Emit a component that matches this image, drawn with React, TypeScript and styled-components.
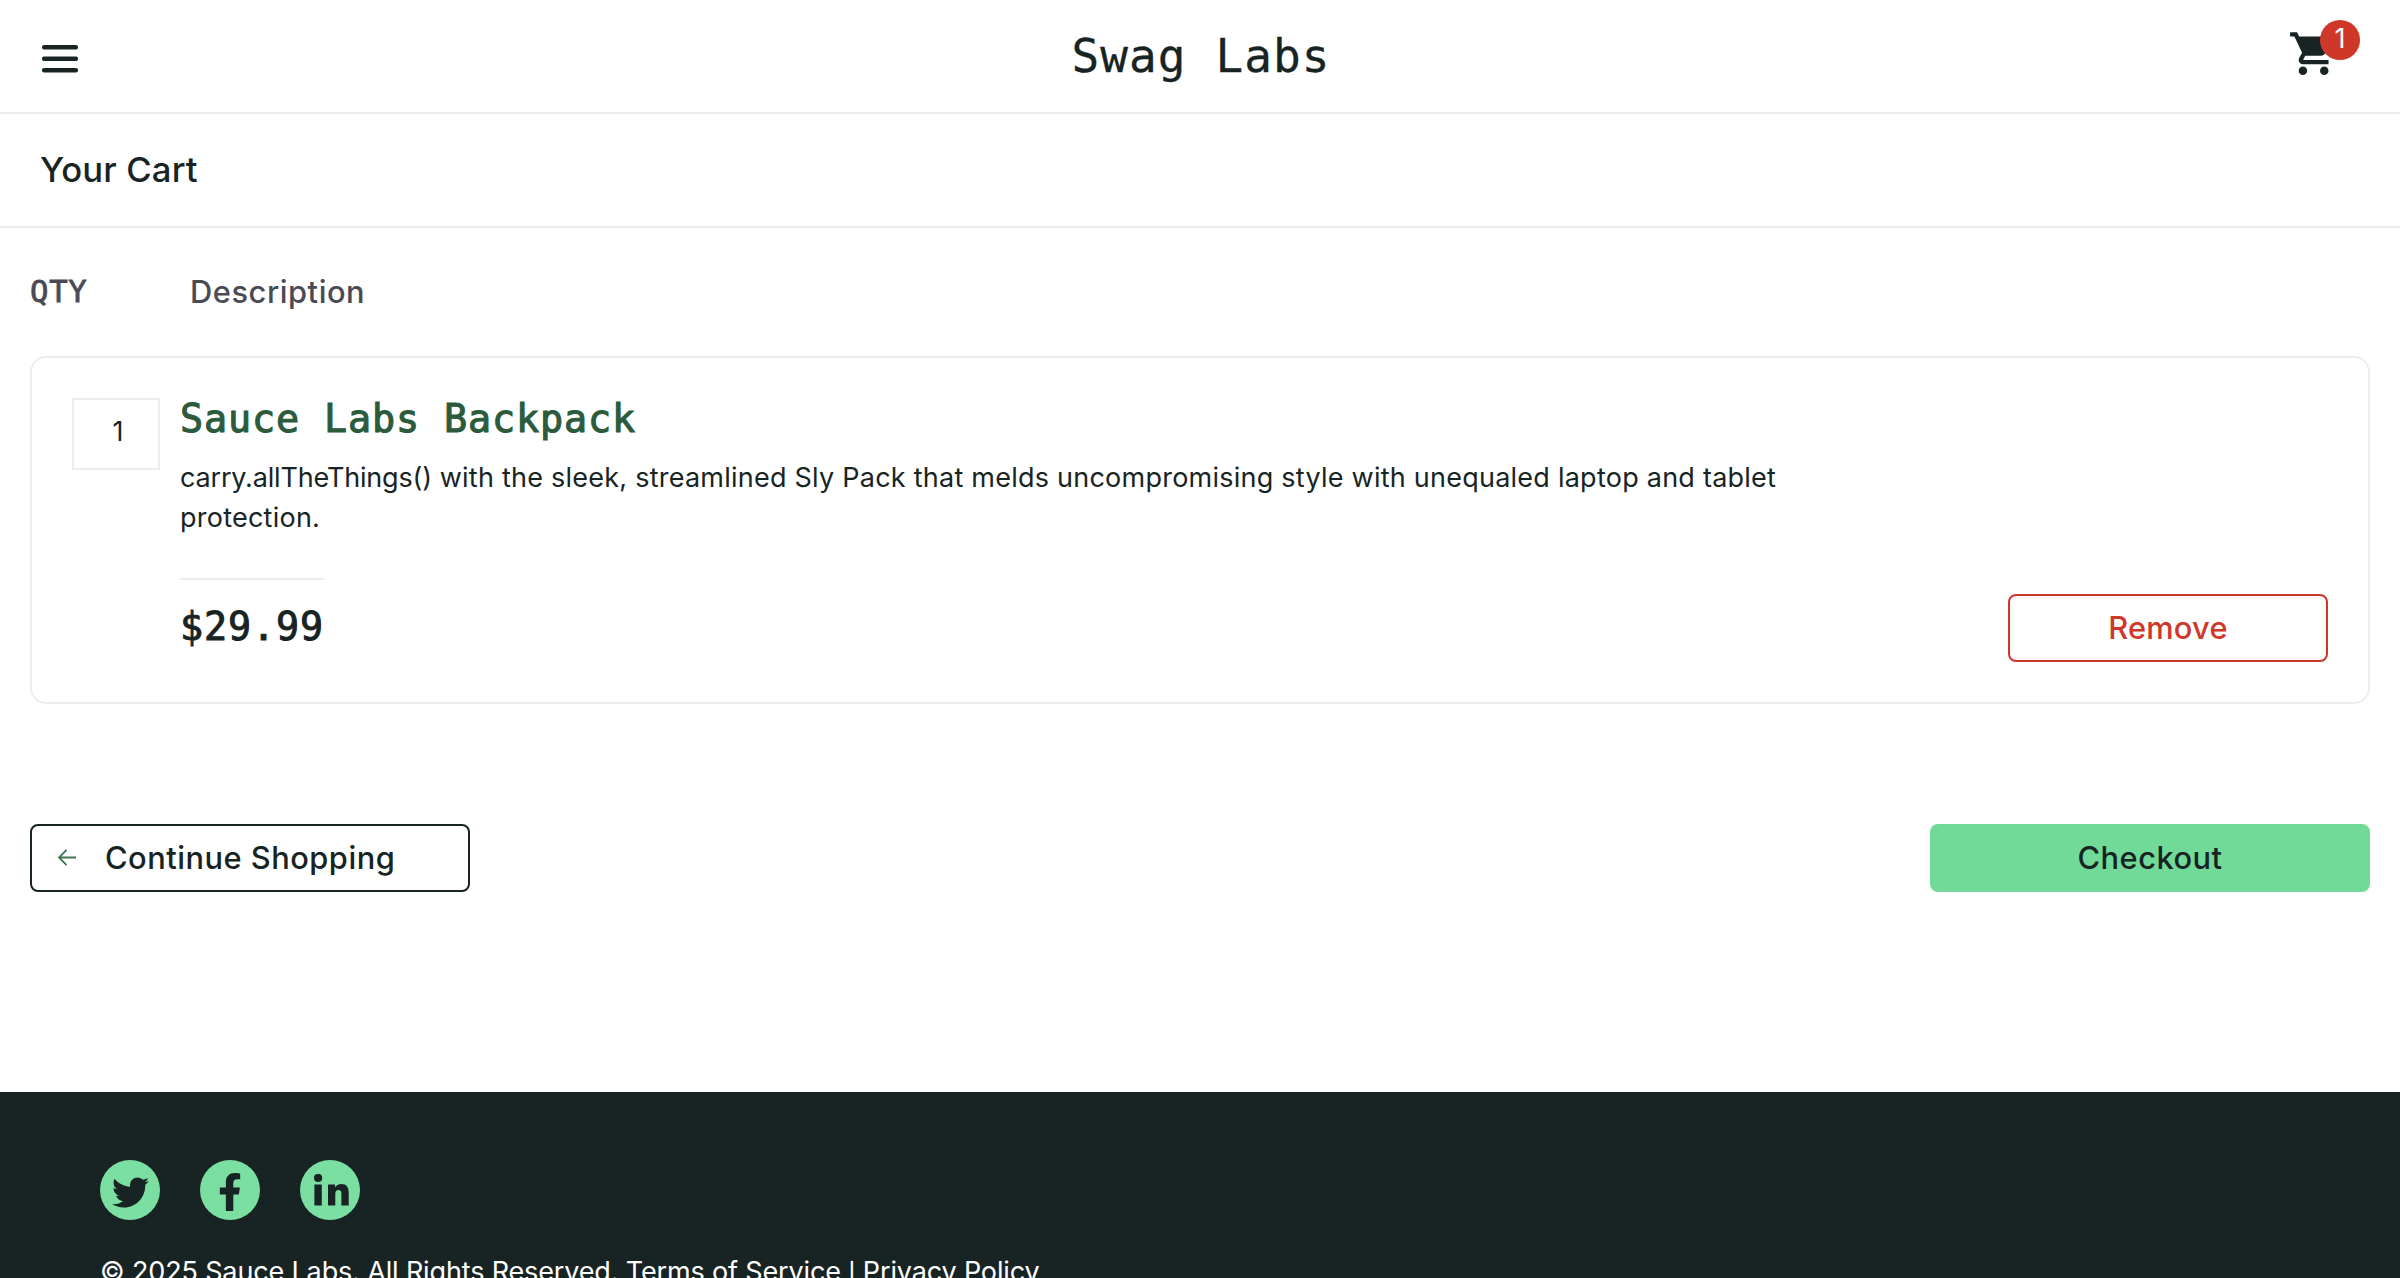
import React from "react";
import styled, { createGlobalStyle } from "styled-components";
import { FaFacebookF, FaTwitter } from "react-icons/fa";

const ink = "#182424";
const line = "#ededed";
const red = "#cf3729";
const sans = `Inter, "Liberation Sans", sans-serif`;
const mono = `"DejaVu Sans Mono", "Liberation Mono", monospace`;

const GlobalStyle = createGlobalStyle`
  * { box-sizing: border-box; }
  body { margin: 0; background: #fff; color: ${ink}; font-family: ${sans}; }
  button { margin: 0; padding: 0; border: 0; background: none; color: inherit; font: inherit; cursor: pointer; }
`;

const Page = styled.div`
  display: flex;
  flex-direction: column;
  height: 1278px;
  overflow: hidden;
`;

const Header = styled.header`
  flex: none;
  display: grid;
  grid-template-columns: 1fr auto 1fr;
  align-items: center;
  height: 114px;
  padding: 0 40px 0 42px;
  border-bottom: 2px solid ${line};
`;

const MenuButton = styled.button`
  justify-self: start;
  display: flex;
  margin-top: 5px;
`;

const Brand = styled.div`
  font: 400 46px/60px ${mono};
  letter-spacing: 1.1px;
  -webkit-text-stroke: 0.3px ${ink};
`;

const CartLink = styled.a`
  position: relative;
  justify-self: end;
  display: flex;
  width: 72px;
  height: 56px;
`;

const Badge = styled.span`
  position: absolute;
  top: -8px;
  right: 0;
  width: 40px;
  height: 40px;
  border-radius: 50%;
  background: ${red};
  color: #fff;
  font-size: 27px;
  line-height: 38px;
  text-align: center;
`;

const SubHeader = styled.div`
  flex: none;
  display: flex;
  align-items: center;
  height: 114px;
  padding: 0 40px 2px;
  border-bottom: 2px solid ${line};
`;

const Title = styled.h1`
  margin: 0;
  font-size: 34.66px;
  font-weight: 450;
  line-height: 44px;
  letter-spacing: 0.15px;
`;

const Main = styled.main`
  flex: none;
  padding: 0 30px;
`;

const Labels = styled.div`
  display: flex;
  align-items: center;
  height: 128px;
  color: #4a4a55;
`;

const QtyLabel = styled.div`
  width: 160px;
  font: 400 30.7px/40px ${mono};
  letter-spacing: 0.7px;
  -webkit-text-stroke: 0.8px #4a4a55;
`;

const DescriptionLabel = styled.div`
  font-size: 30.8px;
  font-weight: 450;
  line-height: 40px;
  letter-spacing: 0.55px;
`;

const Item = styled.article`
  display: flex;
  gap: 20px;
  height: 348px;
  padding: 40px;
  border: 2px solid ${line};
  border-radius: 16px;
`;

const Quantity = styled.div`
  flex: none;
  width: 88px;
  height: 72px;
  padding: 11px 0 0 4px;
  border: 2px solid ${line};
  font-size: 27px;
  line-height: 42px;
  text-align: center;
`;

const Details = styled.div`
  flex: 1;
  display: flex;
  flex-direction: column;
`;

const ItemName = styled.a`
  color: #2b5a3c;
  font: 400 38.4px/41px ${mono};
  letter-spacing: 0.88px;
  -webkit-text-stroke: 1.1px #2b5a3c;
`;

const ItemText = styled.p`
  max-width: 1640px;
  margin: 19px 0 0;
  font-size: 27px;
  line-height: 40px;
  letter-spacing: 0.24px;
`;

const Code = styled.span`
  letter-spacing: -0.18px;
`;

const PriceBar = styled.div`
  display: flex;
  justify-content: space-between;
  align-items: flex-end;
  height: 84px;
  margin-top: auto;
`;

const Price = styled.div`
  width: 144px;
  height: 84px;
  padding-top: 21px;
  border-top: 2px solid ${line};
  font: 400 38.4px/51px ${mono};
  letter-spacing: 0.88px;
  -webkit-text-stroke: 1px ${ink};
`;

const Button = styled.button<{ $width: number; $tone: string; $fill?: string; $tracking?: number }>`
  display: flex;
  align-items: center;
  justify-content: center;
  width: ${(p) => p.$width}px;
  height: 68px;
  padding-bottom: 1px;
  border: 2px solid ${(p) => p.$fill ?? p.$tone};
  border-radius: 8px;
  background: ${(p) => p.$fill ?? "#fff"};
  color: ${(p) => p.$tone};
  font-size: 30.8px;
  font-weight: 450;
  letter-spacing: ${(p) => p.$tracking ?? 0.5}px;
  white-space: nowrap;
`;

const BackButton = styled(Button)`
  justify-content: flex-start;
  gap: 29px;
  padding-left: 26px;
`;

const Actions = styled.div`
  display: flex;
  justify-content: space-between;
  margin: 120px 0 200px;
`;

const Footer = styled.footer`
  flex: none;
  height: 260px;
  padding: 68px 100px 0;
  background: ${ink};
  color: #fff;
`;

const Social = styled.div`
  display: flex;
  gap: 40px;
`;

const Disc = styled.a<{ $x?: number; $y?: number }>`
  display: flex;
  align-items: center;
  justify-content: center;
  width: 60px;
  height: 60px;
  padding: ${(p) => p.$y ?? 0}px 0 0 ${(p) => p.$x ?? 0}px;
  border-radius: 50%;
  background: #7adfa0;
  color: ${ink};
`;

const Copyright = styled.div`
  margin-top: 32px;
  font-size: 27px;
  line-height: 40px;
  letter-spacing: -0.15px;
  white-space: nowrap;
`;

const Bar = styled.span`
  font-size: 21px;
  font-weight: 500;
`;

const MenuIcon = () => (
  <svg width="36" height="28" viewBox="0 0 36 28" fill={ink}>
    <rect y="0" width="36" height="4.6" rx="2" />
    <rect y="11.5" width="36" height="4.6" rx="2" />
    <rect y="23" width="36" height="4.6" rx="2" />
  </svg>
);

const CartIcon = () => (
  <svg width="51.2" height="51.2" viewBox="0 0 24 24" fill={ink}>
    <path d="M7 18c-1.1 0-1.99.9-1.99 2S5.9 22 7 22s2-.9 2-2-.9-2-2-2zM1 2v2h2l3.6 7.59-1.35 2.45c-.16.28-.25.61-.25.96 0 1.1.9 2 2 2h12v-2H7.42c-.14 0-.25-.11-.25-.25l.03-.12.9-1.63h7.45c.75 0 1.41-.41 1.75-1.03l3.58-6.49A1 1 0 0 0 20 4H5.21l-.94-2H1zm16 16c-1.1 0-1.99.9-1.99 2s.89 2 1.99 2 2-.9 2-2-.9-2-2-2z" />
  </svg>
);

const ArrowIcon = () => (
  <svg width="18" height="17" viewBox="0 0 18 17" fill="none" stroke="#3d7a52" strokeWidth="1.9">
    <path d="M18 8.500H1.200M8.600 0.800L1 8.500l7.600 7.700" />
  </svg>
);

const LinkedInIcon = () => (
  <svg width="35" height="32" viewBox="0 0 35 32" fill="currentColor">
    <circle cx="4.1" cy="4" r="4.1" />
    <path d="M.4 10.6h7.4v21H.4zM14 10.6h7v2.9c1.300-2.200 3.500-3.400 6.300-3.400 5.200 0 7.400 3.200 7.400 8.500v13h-7.300V20c0-2.500-.9-4-3-4s-3.100 1.500-3.100 4v11.600H14z" />
  </svg>
);

export default function App() {
  return (
    <Page>
      <GlobalStyle />
      <Header>
        <MenuButton aria-label="Open menu">
          <MenuIcon />
        </MenuButton>
        <Brand>Swag Labs</Brand>
        <CartLink>
          <CartIcon />
          <Badge>1</Badge>
        </CartLink>
      </Header>
      <SubHeader>
        <Title>Your Cart</Title>
      </SubHeader>
      <Main>
        <Labels>
          <QtyLabel>QTY</QtyLabel>
          <DescriptionLabel>Description</DescriptionLabel>
        </Labels>
        <Item>
          <Quantity>1</Quantity>
          <Details>
            <ItemName>Sauce Labs Backpack</ItemName>
            <ItemText>
              <Code>carry.allTheThings()</Code> with the sleek, streamlined Sly Pack that melds uncompromising
              style with unequaled laptop and tablet protection.
            </ItemText>
            <PriceBar>
              <Price>$29.99</Price>
              <Button $width={320} $tone={red} $tracking={0.2}>Remove</Button>
            </PriceBar>
          </Details>
        </Item>
        <Actions>
          <BackButton $width={440} $tone={ink}>
            <ArrowIcon />
            Continue Shopping
          </BackButton>
          <Button $width={440} $tone={ink} $fill="#72da99">Checkout</Button>
        </Actions>
      </Main>
      <Footer>
        <Social>
          <Disc aria-label="Twitter" $x={1} $y={5}><FaTwitter size={37} /></Disc>
          <Disc aria-label="Facebook" $y={4}><FaFacebookF size={38} /></Disc>
          <Disc aria-label="LinkedIn" $x={3}><LinkedInIcon /></Disc>
        </Social>
        <Copyright>
          © 2025 Sauce Labs. All Rights Reserved. Terms of Service <Bar>|</Bar> Privacy Policy
        </Copyright>
      </Footer>
    </Page>
  );
}
